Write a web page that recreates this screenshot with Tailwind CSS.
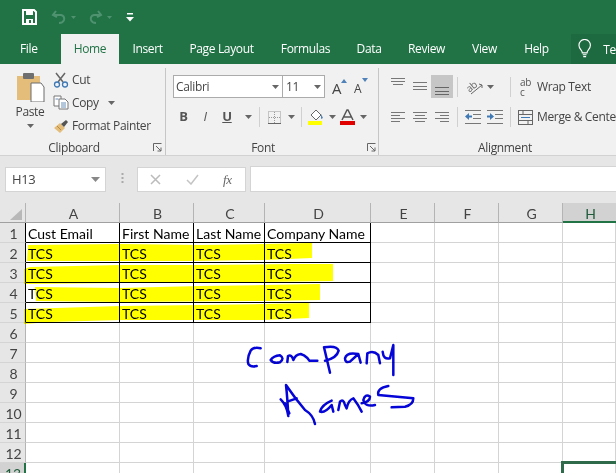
<!DOCTYPE html>
<html>
<head>
<meta charset="utf-8">
<script src="https://cdn.jsdelivr.net/npm/@tailwindcss/browser@4"></script>
</head>
<body class="m-0">
<div class="relative w-[616px] h-[473px] overflow-hidden bg-white font-['Open_Sans',sans-serif] text-[12px] tracking-[-0.35px] text-[#444]">

  <!-- Title bar -->
  <div class="h-[34px] bg-[#217346] flex items-center">
    <svg class="ml-[22px]" width="15" height="16" viewBox="0 0 15 16"><path d="M1 1h11l2 2v12H1z" fill="none" stroke="#fff" stroke-width="2"/><rect x="4" y="1" width="7" height="5" fill="#fff"/><rect x="4" y="10" width="7" height="5" fill="#fff"/><rect x="7" y="11" width="2" height="3" fill="#217346"/></svg>
    <svg class="ml-[14px]" width="26" height="16" viewBox="0 0 26 16"><path d="M5 2 2 6l4 2M2.500 6H10q4 1 3 5-1 3-5 3" fill="none" stroke="#4f9270" stroke-width="2"/><path d="M20 7h5l-2.500 3z" fill="#4f9270"/></svg>
    <svg class="ml-[10px]" width="26" height="16" viewBox="0 0 26 16"><path d="M11 2l3 4-4 2M13.500 6H7q-4 1-3 5 1 3 5 3" fill="none" stroke="#4f9270" stroke-width="2"/><path d="M20 7h5l-2.500 3z" fill="#4f9270"/></svg>
    <svg class="ml-[13px]" width="8" height="9" viewBox="0 0 8 9"><rect x="1" y="0" width="6" height="1.500" fill="#fff"/><path d="M0 4h8L4 8.500z" fill="#fff"/></svg>
  </div>

  <!-- Tabs -->
  <div class="h-[30px] bg-[#217346] flex text-[12px] text-white leading-[29px]">
    <div class="w-[61px] pl-[20px]">File</div>
    <div class="w-[58px] bg-[#f1f1f1] text-center text-[#217346]">Home</div>
    <div class="w-[57px] text-center">Insert</div>
    <div class="w-[91px] text-center">Page Layout</div>
    <div class="w-[77px] text-center">Formulas</div>
    <div class="w-[50px] text-center">Data</div>
    <div class="w-[65px] text-center">Review</div>
    <div class="w-[51px] text-center">View</div>
    <div class="w-[53px] text-center">Help</div>
    <div class="ml-[8px] w-[45px] bg-[#1e6a40] flex items-center">
      <svg class="ml-[7px]" width="14" height="20" viewBox="0 0 14 20"><path d="M4.500 14c0-3-3.500-4-3.500-8a6 6 0 0 1 12 0c0 4-3.500 5-3.500 8z" fill="none" stroke="#fff" stroke-width="1.200"/><path d="M5 16h4M5.500 18h3" stroke="#fff" stroke-width="1.200"/></svg>
      <span class="ml-[12px]">Te</span>
    </div>
  </div>

  <!-- Ribbon -->
  <div class="h-[92px] bg-[#f1f1f1] border-b border-[#d2d2d2] flex">

    <!-- Clipboard -->
    <div class="w-[166px] relative flex flex-col">
      <div class="h-[76px] flex">
        <div class="ml-[14px] w-[32px] flex flex-col items-center">
          <svg class="mt-[8px]" width="30" height="30" viewBox="0 0 30 30"><rect x="2" y="4" width="23" height="24" fill="#e4bd7b"/><rect x="8" y="1" width="11" height="6" rx="1" fill="#6f6f6f"/><path d="M16 11h10l3 4v15H16z" fill="#fff" stroke="#6d6d6d"/></svg>
          <div class="mt-[2px] leading-[16px]">Paste</div>
          <svg class="mt-[4px]" width="7" height="4" viewBox="0 0 7 4"><path d="M0 0h7L3.500 4z" fill="#666"/></svg>
        </div>
        <div class="ml-[7px] pt-[4px] flex flex-col">
          <div class="h-[23px] flex items-center">
            <svg width="16" height="16" viewBox="0 0 16 16"><path d="M3 1l7 9M12 1 5 10" stroke="#666" stroke-width="1.500" fill="none"/><circle cx="4" cy="12.500" r="2.500" fill="none" stroke="#3e79b5" stroke-width="1.300"/><circle cx="12" cy="12.500" r="2.500" fill="none" stroke="#3e79b5" stroke-width="1.300"/></svg>
            <span class="ml-[3px]">Cut</span>
          </div>
          <div class="h-[23px] flex items-center">
            <svg width="16" height="15" viewBox="0 0 16 15"><path d="M1 1h7v10H1z" fill="#fff" stroke="#777"/><path d="M6 4h6l3 3v7H6z" fill="#fff" stroke="#777"/><path d="M8 8h5M8 10h5M8 12h5M2.500 4h3" stroke="#6b8fb5"/></svg>
            <span class="ml-[3px]">Copy</span>
            <svg class="ml-[9px]" width="7" height="4" viewBox="0 0 7 4"><path d="M0 0h7L3.500 4z" fill="#666"/></svg>
          </div>
          <div class="h-[23px] flex items-center">
            <svg width="16" height="15" viewBox="0 0 16 15"><path d="M1 10 7 5l5 5-5 5z" fill="#e4bd7b"/><path d="M4 8l4 4" stroke="#b58b45"/><path d="M8 6l5-4 2 2-4 5z" fill="#555"/></svg>
            <span class="ml-[3px]">Format Painter</span>
          </div>
        </div>
      </div>
      <div class="h-[15px] flex items-center">
        <div class="w-[148px] text-center leading-[15px]">Clipboard</div>
        <svg class="ml-[5px]" width="9" height="9" viewBox="0 0 9 9"><path d="M.5 8V.5H8.500M3 3l5 5M8 4.500V8H4.500" fill="none" stroke="#666"/></svg>
      </div>
      <div class="absolute right-0 top-[4px] bottom-0 w-px bg-[#c6c6c6]"></div>
    </div>

    <!-- Font -->
    <div class="w-[213px] relative flex flex-col">
      <div class="h-[76px] pl-[7px] pt-[11px]">
        <div class="h-[23px] flex items-center">
          <div class="w-[110px] h-[23px] bg-white border border-[#ababab] flex items-center justify-between pl-[2px] pr-[3px]">
            <span>Calibri</span>
            <svg width="7" height="4" viewBox="0 0 7 4"><path d="M0 0h7L3.500 4z" fill="#666"/></svg>
          </div>
          <div class="w-[43px] h-[23px] -ml-px bg-white border border-[#ababab] flex items-center justify-between pl-[3px] pr-[3px]">
            <span>11</span>
            <svg width="7" height="4" viewBox="0 0 7 4"><path d="M0 0h7L3.500 4z" fill="#666"/></svg>
          </div>
          <div class="ml-[7px] w-[15px] relative text-[15px] leading-[16px] pt-[3px]">A<svg class="absolute right-0 top-[2px]" width="6" height="4" viewBox="0 0 6 4"><path d="M0 4h6L3 0z" fill="#4e82b8"/></svg></div>
          <div class="ml-[7px] w-[14px] relative text-[12px] leading-[16px] pt-[5px]">A<svg class="absolute right-0 top-[2px]" width="6" height="4" viewBox="0 0 6 4"><path d="M0 0h6L3 4z" fill="#4e82b8"/></svg></div>
        </div>
        <div class="mt-[8px] h-[22px] flex items-center">
          <div class="w-[21px] text-center font-bold text-[13px] text-[#555]">B</div>
          <div class="w-[22px] text-center italic text-[13px] text-[#555]">I</div>
          <div class="w-[22px] text-center font-bold underline text-[13px] text-[#555]">U</div>
          <svg class="ml-[7px]" width="7" height="4" viewBox="0 0 7 4"><path d="M0 0h7L3.500 4z" fill="#666"/></svg>
          <div class="ml-[7px] w-px h-[20px] bg-[#d0d0d0]"></div>
          <svg class="ml-[8px]" width="13" height="13" viewBox="0 0 13 13"><rect x=".5" y=".5" width="12" height="12" fill="none" stroke="#999" stroke-dasharray="1 1"/><path d="M6.500 1v11M1 6.500h11" stroke="#999" stroke-dasharray="1 1"/><path d="M0 12.500h13" stroke="#666"/></svg>
          <svg class="ml-[7px]" width="7" height="4" viewBox="0 0 7 4"><path d="M0 0h7L3.500 4z" fill="#666"/></svg>
          <div class="ml-[6px] w-px h-[20px] bg-[#d0d0d0]"></div>
          <svg class="ml-[6px]" width="17" height="16" viewBox="0 0 17 16"><path d="M3 6l5-5 5 5-5 5z" fill="#fff" stroke="#666"/><path d="M13 5l2 4-2 1z" fill="#4e82b8"/><rect x="0" y="12" width="14" height="4" fill="#ffff00"/></svg>
          <svg class="ml-[4px]" width="7" height="4" viewBox="0 0 7 4"><path d="M0 0h7L3.500 4z" fill="#666"/></svg>
          <svg class="ml-[3px]" width="17" height="16" viewBox="0 0 17 16"><path d="M3 11 8 1h1l5 10M5 8h7" fill="none" stroke="#555" stroke-width="1.500"/><rect x="1" y="12" width="15" height="4" fill="#e00000"/></svg>
          <svg class="ml-[4px]" width="7" height="4" viewBox="0 0 7 4"><path d="M0 0h7L3.500 4z" fill="#666"/></svg>
        </div>
      </div>
      <div class="h-[15px] flex items-center">
        <div class="w-[194px] text-center leading-[15px]">Font</div>
        <svg class="ml-[7px]" width="9" height="9" viewBox="0 0 9 9"><path d="M.5 8V.5H8.500M3 3l5 5M8 4.500V8H4.500" fill="none" stroke="#666"/></svg>
      </div>
      <div class="absolute right-0 top-[4px] bottom-0 w-px bg-[#c6c6c6]"></div>
    </div>

    <!-- Alignment -->
    <div class="flex-1 flex flex-col min-w-0">
      <div class="h-[76px] pl-[12px] pt-[11px] whitespace-nowrap">
        <div class="h-[23px] flex items-center [&>*]:shrink-0">
          <svg width="14" height="23" viewBox="0 0 14 23"><path d="M0 3.500h14M0 6.500h14M2 9.500h10" stroke="#777"/></svg>
          <svg class="ml-[8px]" width="14" height="23" viewBox="0 0 14 23"><path d="M0 7.500h14M0 11.500h14M0 14.500h14" stroke="#777"/></svg>
          <div class="ml-[4px] w-[22px] h-[23px] bg-[#c6c6c6] flex justify-center">
            <svg width="14" height="23" viewBox="0 0 14 23"><path d="M0 12.500h14M0 16.500h14M0 19.500h14" stroke="#666"/></svg>
          </div>
          <div class="ml-[4px] w-px h-[20px] bg-[#d0d0d0]"></div>
          <svg class="ml-[8px] overflow-visible" width="18" height="18" viewBox="0 0 18 18"><text x="1" y="12" font-size="10" fill="#666" transform="rotate(-40 6 10)" font-family="Open Sans">ab</text><path d="M5 16 16 7M13 6l3 1v3" fill="none" stroke="#666"/></svg>
          <svg class="ml-[3px]" width="7" height="4" viewBox="0 0 7 4"><path d="M0 0h7L3.500 4z" fill="#666"/></svg>
          <div class="ml-[16px] w-px h-[20px] bg-[#d0d0d0]"></div>
          <div class="ml-[9px] w-[13px] text-[10px] leading-[10px] text-[#555]">ab<br>c</div>
          <span class="ml-[4px]">Wrap Text</span>
        </div>
        <div class="mt-[8px] h-[22px] flex items-center [&>*]:shrink-0">
          <svg width="14" height="12" viewBox="0 0 14 12"><path d="M0 1.500h14M0 4.500h9M0 7.500h14M0 10.500h9" stroke="#777"/></svg>
          <svg class="ml-[8px]" width="14" height="12" viewBox="0 0 14 12"><path d="M0 1.500h14M2 4.500h10M0 7.500h14M2 10.500h10" stroke="#777"/></svg>
          <svg class="ml-[8px]" width="14" height="12" viewBox="0 0 14 12"><path d="M0 1.500h14M5 4.500h9M0 7.500h14M5 10.500h9" stroke="#777"/></svg>
          <div class="ml-[8px] w-px h-[20px] bg-[#d0d0d0]"></div>
          <svg class="ml-[7px]" width="16" height="14" viewBox="0 0 16 14"><path d="M0 .5h16M8 4.500h8M8 8.500h8M0 13.500h16" stroke="#777"/><path d="M0 6.500 4 3v7z" fill="#3e79b5"/><path d="M3 6.500h4" stroke="#3e79b5" stroke-width="2"/></svg>
          <svg class="ml-[6px]" width="16" height="14" viewBox="0 0 16 14"><path d="M0 .5h16M8 4.500h8M8 8.500h8M0 13.500h16" stroke="#777"/><path d="M7 6.500 3 3v7z" fill="#3e79b5"/><path d="M0 6.500h4" stroke="#3e79b5" stroke-width="2"/></svg>
          <div class="ml-[7px] w-px h-[20px] bg-[#d0d0d0]"></div>
          <svg class="ml-[7px]" width="15" height="15" viewBox="0 0 15 15"><rect x=".5" y=".5" width="14" height="14" fill="none" stroke="#666"/><path d="M.5 4.500h14M.5 10.500h14M5 .5v4M10 10.500v4" stroke="#666"/><path d="M3 7.500h9" stroke="#3e79b5"/></svg>
          <span class="ml-[4px]">Merge &amp; Center</span>
        </div>
      </div>
      <div class="h-[15px] w-[252px] text-center leading-[15px]">Alignment</div>
    </div>
  </div>

  <!-- Formula bar -->
  <div class="h-[47px] bg-[#e6e6e6] pt-[11px] flex items-start">
    <div class="ml-[5px] w-[101px] h-[25px] bg-white border border-[#d4d4d4] flex items-center justify-between pl-[6px] pr-[5px] text-[13px]">
      <span>H13</span>
      <svg width="9" height="5" viewBox="0 0 9 5"><path d="M0 0h9L4.500 5z" fill="#888"/></svg>
    </div>
    <svg class="ml-[15px] mt-[6px]" width="3" height="12" viewBox="0 0 3 12"><path d="M1.500 0v12" stroke="#aaa" stroke-width="2" stroke-dasharray="2 2"/></svg>
    <div class="ml-[13px] w-[109px] h-[25px] bg-white border border-[#d4d4d4] flex items-center">
      <svg class="ml-[12px]" width="11" height="11" viewBox="0 0 11 11"><path d="M1 1l9 9M10 1l-9 9" stroke="#bbb" stroke-width="1.500"/></svg>
      <svg class="ml-[25px]" width="13" height="11" viewBox="0 0 13 11"><path d="M1 6l4 4 7-9" fill="none" stroke="#c4c4c4" stroke-width="1.500"/></svg>
      <span class="ml-[24px] font-['Liberation_Serif',serif] italic text-[13px] text-[#666]">fx</span>
    </div>
    <div class="ml-[4px] flex-1 h-[26px] -mt-px bg-white border border-[#d4d4d4] border-r-0"></div>
  </div>

  <!-- Sheet -->
  <div class="grid grid-cols-[26px_94px_74px_71px_106px_64px_64px_64px_53px] auto-rows-[20px] font-['Lato',sans-serif] text-[14px] tracking-normal text-black leading-[19px] [&>div]:border-r [&>div]:border-b [&>div]:border-[#d4d4d4] [&>div]:pl-[2px] [&>div]:pt-px [&>div]:whitespace-nowrap">
    <!-- Column headers -->
    <div class="bg-[#e6e6e6] border-b-[#a0a0a0]! border-r-[#b4b4b4]! flex items-end"><svg class="ml-[8px] mb-[2px]" width="12" height="11" viewBox="0 0 12 11"><path d="M12 0v11H0z" fill="#b8b8b8"/></svg></div>
    <div class="bg-[#e6e6e6] border-b-[#a0a0a0]! border-r-[#b4b4b4]! text-center text-[#444]">A</div>
    <div class="bg-[#e6e6e6] border-b-[#a0a0a0]! border-r-[#b4b4b4]! text-center text-[#444]">B</div>
    <div class="bg-[#e6e6e6] border-b-[#a0a0a0]! border-r-[#b4b4b4]! text-center text-[#444]">C</div>
    <div class="bg-[#e6e6e6] border-b-[#a0a0a0]! border-r-[#b4b4b4]! text-center text-[#444]">D</div>
    <div class="bg-[#e6e6e6] border-b-[#a0a0a0]! border-r-[#b4b4b4]! text-center text-[#444]">E</div>
    <div class="bg-[#e6e6e6] border-b-[#a0a0a0]! border-r-[#b4b4b4]! text-center text-[#444]">F</div>
    <div class="bg-[#e6e6e6] border-b-[#a0a0a0]! border-r-[#b4b4b4]! text-center text-[#444]">G</div>
    <div class="bg-[#d2d2d2] border-r-0! border-b-[#217346]! border-b-2! text-center text-[#1f5c3a]">H</div>

    <!-- Row 1 -->
    <div class="bg-[#e6e6e6] border-r-black! text-center text-[#444]">1</div>
    <div class="border-black!">Cust Email</div><div class="border-black!">First Name</div><div class="border-black!">Last Name</div><div class="border-black!">Company Name</div><div></div><div></div><div></div><div></div>
    <!-- Row 2 -->
    <div class="bg-[#e6e6e6] border-r-black! text-center text-[#444]">2</div>
    <div class="border-black!">TCS</div><div class="border-black!">TCS</div><div class="border-black!">TCS</div><div class="border-black!">TCS</div><div></div><div></div><div></div><div></div>
    <!-- Row 3 -->
    <div class="bg-[#e6e6e6] border-r-black! text-center text-[#444]">3</div>
    <div class="border-black!">TCS</div><div class="border-black!">TCS</div><div class="border-black!">TCS</div><div class="border-black!">TCS</div><div></div><div></div><div></div><div></div>
    <!-- Row 4 -->
    <div class="bg-[#e6e6e6] border-r-black! text-center text-[#444]">4</div>
    <div class="border-black!">TCS</div><div class="border-black!">TCS</div><div class="border-black!">TCS</div><div class="border-black!">TCS</div><div></div><div></div><div></div><div></div>
    <!-- Row 5 -->
    <div class="bg-[#e6e6e6] border-r-black! text-center text-[#444]">5</div>
    <div class="border-black!">TCS</div><div class="border-black!">TCS</div><div class="border-black!">TCS</div><div class="border-black!">TCS</div><div></div><div></div><div></div><div></div>
    <!-- Rows 6-12 -->
    <div class="bg-[#e6e6e6] border-r-[#b4b4b4]! text-center text-[#444]">6</div><div></div><div></div><div></div><div></div><div></div><div></div><div></div><div></div>
    <div class="bg-[#e6e6e6] border-r-[#b4b4b4]! text-center text-[#444]">7</div><div></div><div></div><div></div><div></div><div></div><div></div><div></div><div></div>
    <div class="bg-[#e6e6e6] border-r-[#b4b4b4]! text-center text-[#444]">8</div><div></div><div></div><div></div><div></div><div></div><div></div><div></div><div></div>
    <div class="bg-[#e6e6e6] border-r-[#b4b4b4]! text-center text-[#444]">9</div><div></div><div></div><div></div><div></div><div></div><div></div><div></div><div></div>
    <div class="bg-[#e6e6e6] border-r-[#b4b4b4]! text-center text-[#444]">10</div><div></div><div></div><div></div><div></div><div></div><div></div><div></div><div></div>
    <div class="bg-[#e6e6e6] border-r-[#b4b4b4]! text-center text-[#444]">11</div><div></div><div></div><div></div><div></div><div></div><div></div><div></div><div></div>
    <div class="bg-[#e6e6e6] border-r-[#b4b4b4]! text-center text-[#444]">12</div><div></div><div></div><div></div><div></div><div></div><div></div><div></div><div></div>
    <!-- Row 13 -->
    <div class="bg-[#d2d2d2] border-r-2! border-r-[#217346]! text-center text-[#1f5c3a]">13</div><div></div><div></div><div></div><div></div><div></div><div></div><div></div>
    <div class="relative"><div class="absolute -left-[2px] -top-[2px] w-[60px] h-[30px] border-l-[3px] border-t-[3px] border-[#2f6b4b]"></div></div>
  </div>

  <!-- Highlighter and pen marks drawn over the sheet -->
  <svg class="absolute left-0 top-0 mix-blend-multiply pointer-events-none" width="616" height="473" viewBox="0 0 616 473">
    <g fill="#ffff00">
      <path d="M28 245 L120 244 L200 245 L264 244 L312 243 L312 258 L264 260 L190 261 L100 261 L27 261z"/>
      <path d="M24 269 L30 267 L120 265 L200 265 L290 264 L333 264 L333 281 L264 282 L120 283 L24 284z"/>
      <path d="M35 287 L120 288 L200 286 L264 285 L320 284 L320 300 L264 301 L120 302 L36 301z"/>
      <path d="M24 309 L120 306 L200 305 L264 304 L309 303 L309 318 L264 320 L120 320 L50 322 L24 324z"/>
    </g>
    <g transform="translate(230 330) scale(.3333)" fill="none" stroke="#0505d8" stroke-width="7.500" stroke-linecap="round" stroke-linejoin="round">
      <path d="M92 55 Q70 50 62 62 Q50 85 55 102 Q62 112 80 108"/>
      <path d="M122 90 Q130 78 150 76 Q165 85 150 97 Q130 102 122 90"/>
      <path d="M172 96 L174 78 Q185 72 190 90 Q196 74 212 72 L222 76 Q232 82 238 92 L262 92"/>
      <path d="M282 52 L300 128 M282 52 Q320 45 326 62 Q320 85 285 92"/>
      <path d="M385 72 Q350 65 345 85 Q345 100 360 95 L385 72 L392 98"/>
      <path d="M410 100 L412 70 Q430 60 445 75 L450 100"/>
      <path d="M458 65 Q460 90 480 85 L490 45 L490 135"/>
      <path d="M152 208 Q170 225 175 258 Q172 200 168 165 Q195 205 225 240 Q250 255 255 282 M165 220 L178 250 M172 215 L200 205"/>
      <path d="M305 212 Q275 225 270 245 Q285 250 305 225 L310 245"/>
      <path d="M325 240 L330 215 Q340 205 345 225 L350 235 Q355 210 370 205 Q385 225 395 245"/>
      <path d="M395 220 Q420 215 420 200 Q405 190 400 210 Q405 232 435 225"/>
      <path d="M475 168 Q440 175 445 195 L550 205 Q550 225 525 230 L485 232"/>
    </g>
  </svg>
</div>
</body>
</html>
